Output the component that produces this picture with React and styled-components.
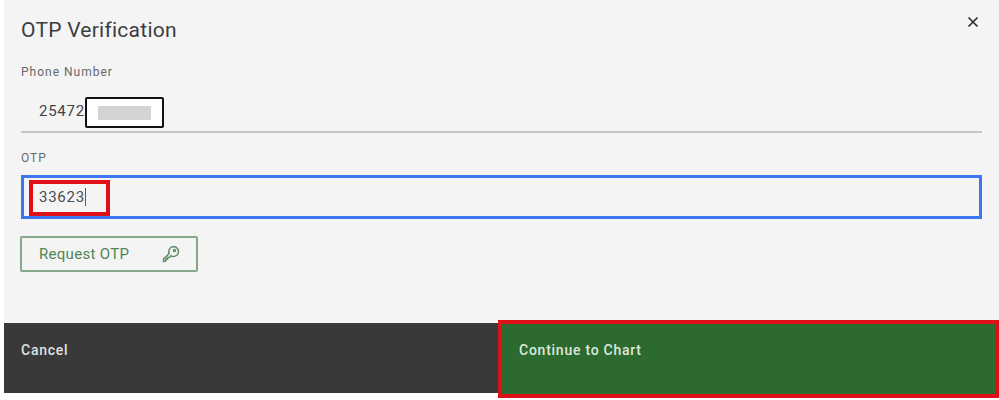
import styled, { createGlobalStyle } from "styled-components";

const GlobalStyle = createGlobalStyle`
  html, body {
    margin: 0;
    padding: 0;
    background: #ffffff;
  }
  * {
    box-sizing: border-box;
  }
`;

const Page = styled.div`
  width: 999px;
  height: 400px;
  padding-left: 4px;
  background: #ffffff;
  font-family: Roboto, "Liberation Sans", sans-serif;
  overflow: hidden;
`;

const Modal = styled.section`
  position: relative;
  height: 393px;
  background: #f4f4f4;
  display: flex;
  flex-direction: column;
`;

const Body = styled.div`
  flex: 1;
  padding: 18px 17px 0 17px;
`;

const Title = styled.h2`
  margin: 0 0 23px;
  font-size: 21px;
  line-height: 24px;
  font-weight: 400;
  letter-spacing: 0.25px;
  color: #3a3d42;
`;

const CloseButton = styled.button`
  position: absolute;
  top: 14px;
  right: 18px;
  width: 16px;
  height: 16px;
  padding: 0;
  border: 0;
  background: none;
  display: flex;
  align-items: center;
  justify-content: center;
`;

const Label = styled.label`
  display: block;
  font-size: 12px;
  line-height: 14px;
  letter-spacing: 1px;
  color: #66686c;
`;

const ReadField = styled.div`
  position: relative;
  height: 50px;
  margin-top: 4px;
  padding: 8px 18px 0;
  display: flex;
  align-items: center;
  border-bottom: 2px solid #c6c6c6;
  font-size: 15px;
  letter-spacing: 0.75px;
  color: #3f4247;
`;

const Redaction = styled.div`
  position: absolute;
  left: 64px;
  top: 14px;
  width: 79px;
  height: 31px;
  border: 2px solid #111111;
  border-radius: 2px;
  background: #ffffff;
  display: flex;
  align-items: center;
  justify-content: center;
`;

const RedactionFill = styled.div`
  width: 53px;
  height: 14px;
  background: #d4d4d4;
`;

const FieldGroup = styled.div`
  margin-top: 18px;
`;

const InputBox = styled.div`
  position: relative;
  height: 44px;
  margin-top: 10px;
  padding: 0 15px;
  display: flex;
  align-items: center;
  border: 3px solid #3b76f0;
  font-size: 15px;
  letter-spacing: 0.75px;
  color: #4a4d52;
`;

const Caret = styled.span`
  width: 1px;
  height: 18px;
  background: #55585c;
`;

const RedBox = styled.div`
  position: absolute;
  left: 5px;
  top: 2px;
  width: 81px;
  height: 36px;
  border: 4px solid #e01018;
`;

const RequestButton = styled.button`
  margin-top: 17px;
  margin-left: -1px;
  width: 178px;
  height: 36px;
  padding: 0 16px 0 17px;
  display: flex;
  align-items: center;
  justify-content: space-between;
  border: 2px solid #84a888;
  border-radius: 2px;
  background: transparent;
  font-family: inherit;
  font-size: 15px;
  letter-spacing: 0.3px;
  color: #4e8656;
`;

const Footer = styled.footer`
  position: relative;
  height: 70px;
  display: grid;
  grid-template-columns: 494px 1fr;
`;

const FooterButton = styled.div`
  padding: 19px 17px;
  font-size: 14px;
  font-weight: 500;
  line-height: 16px;
  letter-spacing: 0.75px;
  color: #dfe0e2;
  background: ${(props) => props.$bg};
`;

const ContinueBox = styled.div`
  position: absolute;
  left: 494px;
  right: 0;
  top: -3px;
  height: 78px;
  border: 4px solid #e01018;
  background: #2c6a2f;
  padding: 18px 17px;
  font-size: 14px;
  font-weight: 500;
  line-height: 16px;
  letter-spacing: 0.75px;
  color: #dfe8dc;
`;

const KeyIcon = () => (
  <svg width="18" height="18" viewBox="0 0 18 18" fill="none" stroke="#5f9166" strokeWidth="1.5">
    <path d="M11.5 1.5a5 5 0 1 1-2.6 9.3L7.2 12.5H5.5v1.7H3.8v1.7L1.5 16.5v-2.4l5.7-5.7a5 5 0 0 1 4.3-6.9Z" />
    <circle cx="12.5" cy="5.5" r="1" />
  </svg>
);

const CloseIcon = () => (
  <svg width="12" height="12" viewBox="0 0 12 12" stroke="#2a2a2a" strokeWidth="1.6">
    <path d="M1.5 1.5l9 9M10.5 1.5l-9 9" />
  </svg>
);

export default function App() {
  return (
    <>
      <GlobalStyle />
      <Page>
        <Modal>
          <Body>
            <Title>OTP Verification</Title>
            <CloseButton>
              <CloseIcon />
            </CloseButton>
            <Label>Phone Number</Label>
            <ReadField>
              25472
              <Redaction>
                <RedactionFill />
              </Redaction>
            </ReadField>
            <FieldGroup>
              <Label>OTP</Label>
              <InputBox>
                33623
                <Caret />
                <RedBox />
              </InputBox>
            </FieldGroup>
            <RequestButton>
              Request OTP
              <KeyIcon />
            </RequestButton>
          </Body>
          <Footer>
            <FooterButton $bg="#393939">Cancel</FooterButton>
            <FooterButton $bg="#2c6a2f" />
            <ContinueBox>Continue to Chart</ContinueBox>
          </Footer>
        </Modal>
      </Page>
    </>
  );
}
